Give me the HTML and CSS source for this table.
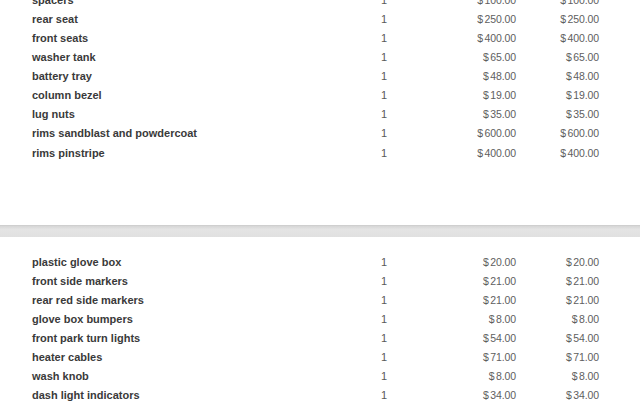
FILE: index.html
```html
<!DOCTYPE html>
<html>
<head>
<meta charset="utf-8">
<link rel="stylesheet" href="styles.css">
</head>
<body>
<div class="page">
  <section class="items first">
    <div class="row"><span class="name">spacers</span><span class="qty">1</span><span class="price"><span class="cur">$</span>100.00</span><span class="total"><span class="cur">$</span>100.00</span></div>
    <div class="row"><span class="name">rear seat</span><span class="qty">1</span><span class="price"><span class="cur">$</span>250.00</span><span class="total"><span class="cur">$</span>250.00</span></div>
    <div class="row"><span class="name">front seats</span><span class="qty">1</span><span class="price"><span class="cur">$</span>400.00</span><span class="total"><span class="cur">$</span>400.00</span></div>
    <div class="row"><span class="name">washer tank</span><span class="qty">1</span><span class="price"><span class="cur">$</span>65.00</span><span class="total"><span class="cur">$</span>65.00</span></div>
    <div class="row"><span class="name">battery tray</span><span class="qty">1</span><span class="price"><span class="cur">$</span>48.00</span><span class="total"><span class="cur">$</span>48.00</span></div>
    <div class="row"><span class="name">column bezel</span><span class="qty">1</span><span class="price"><span class="cur">$</span>19.00</span><span class="total"><span class="cur">$</span>19.00</span></div>
    <div class="row"><span class="name">lug nuts</span><span class="qty">1</span><span class="price"><span class="cur">$</span>35.00</span><span class="total"><span class="cur">$</span>35.00</span></div>
    <div class="row"><span class="name">rims sandblast and powdercoat</span><span class="qty">1</span><span class="price"><span class="cur">$</span>600.00</span><span class="total"><span class="cur">$</span>600.00</span></div>
    <div class="row"><span class="name">rims pinstripe</span><span class="qty">1</span><span class="price"><span class="cur">$</span>400.00</span><span class="total"><span class="cur">$</span>400.00</span></div>
  </section>
  <div class="divider"></div>
  <section class="items second">
    <div class="row"><span class="name">plastic glove box</span><span class="qty">1</span><span class="price"><span class="cur">$</span>20.00</span><span class="total"><span class="cur">$</span>20.00</span></div>
    <div class="row"><span class="name">front side markers</span><span class="qty">1</span><span class="price"><span class="cur">$</span>21.00</span><span class="total"><span class="cur">$</span>21.00</span></div>
    <div class="row"><span class="name">rear red side markers</span><span class="qty">1</span><span class="price"><span class="cur">$</span>21.00</span><span class="total"><span class="cur">$</span>21.00</span></div>
    <div class="row"><span class="name">glove box bumpers</span><span class="qty">1</span><span class="price"><span class="cur">$</span>8.00</span><span class="total"><span class="cur">$</span>8.00</span></div>
    <div class="row"><span class="name">front park turn lights</span><span class="qty">1</span><span class="price"><span class="cur">$</span>54.00</span><span class="total"><span class="cur">$</span>54.00</span></div>
    <div class="row"><span class="name">heater cables</span><span class="qty">1</span><span class="price"><span class="cur">$</span>71.00</span><span class="total"><span class="cur">$</span>71.00</span></div>
    <div class="row"><span class="name">wash knob</span><span class="qty">1</span><span class="price"><span class="cur">$</span>8.00</span><span class="total"><span class="cur">$</span>8.00</span></div>
    <div class="row"><span class="name">dash light indicators</span><span class="qty">1</span><span class="price"><span class="cur">$</span>34.00</span><span class="total"><span class="cur">$</span>34.00</span></div>
  </section>
</div>
</body>
</html>
```
FILE: styles.css
```css
html, body {
  margin: 0;
  padding: 0;
  background: #fff;
  overflow: hidden;
}
.page {
  width: 640px;
  height: 406px;
  overflow: hidden;
  font-family: "Liberation Sans", Arial, sans-serif;
  font-size: 11px;
}
.items {
  display: flex;
  flex-direction: column;
  padding: 0 41px 0 32px;
}
.items.first {
  margin-top: -10px;
}
.row {
  display: grid;
  grid-template-columns: 322px 60px 102px 83px;
  height: 19.14px;
  align-items: center;
}
.name {
  font-weight: bold;
  color: #3a3a3a;
}
.qty {
  text-align: center;
  color: #5a5a5a;
}
.price, .total {
  text-align: right;
  color: #5e5e5e;
  font-size: 10.5px;
  letter-spacing: -0.1px;
}
.cur {
  margin-right: 1.5px;
}
.divider {
  margin-top: 63px;
  height: 11px;
  background: linear-gradient(#d6d6d6, #e4e4e4 30%, #e0e0e0);
  border-top: 1px solid #cfcfcf;
  margin-bottom: 15px;
}
.items.second .row {
  height: 19px;
}
```
